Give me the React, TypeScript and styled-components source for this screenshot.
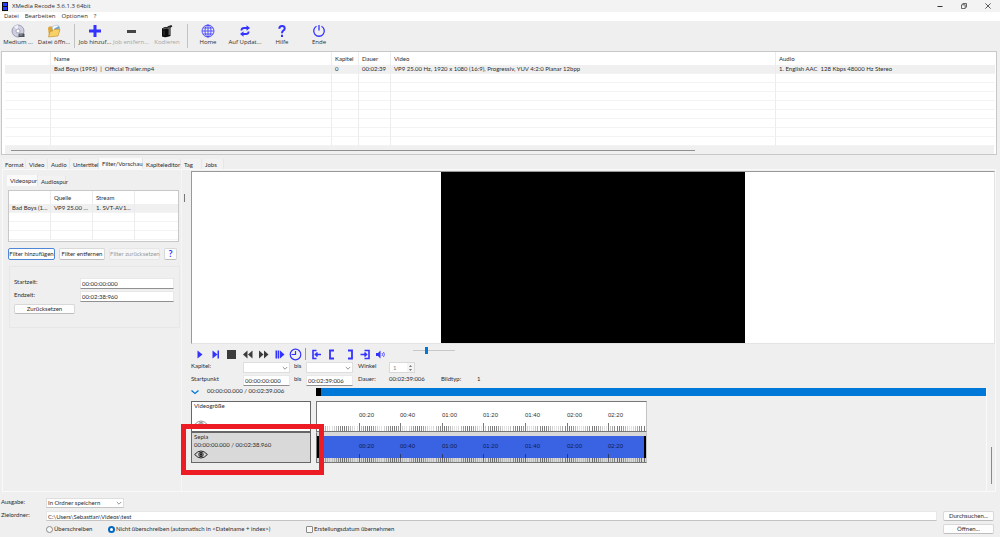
import React from "react";
import styled, { createGlobalStyle, css } from "styled-components";

const BLUE = "#3333ff";
const ACCENT = "#0078d7";
const CHROME_FONT = `"Open Sans", "Noto Sans", sans-serif`;

const GlobalStyle = createGlobalStyle`
  *, *::before, *::after { box-sizing: border-box; }
  body {
    margin: 0;
    background: #efefef;
    color: #2c2c2c;
    font-family: Lato, "Open Sans", sans-serif;
    font-size: 6px;
    line-height: 8px;
  }
  button, input, select { font: inherit; color: inherit; margin: 0; padding: 0; }
  svg { display: block; flex: none; }
`;

const Window = styled.div`
  display: flex;
  flex-direction: column;
  min-height: 100vh;
`;

/* ---------- window chrome ---------- */

const TitleBar = styled.header`
  display: flex;
  align-items: center;
  height: 12px;
  padding-left: 2px;
  background: #f3f3f3;
`;

const Title = styled.h1`
  flex: 1;
  margin: 0 0 0 4px;
  font-family: ${CHROME_FONT};
  font-size: 6px;
  line-height: 10px;
  font-weight: 400;
`;

const WindowButton = styled.button`
  display: grid;
  place-items: center;
  width: 24px;
  height: 12px;
  border: 0;
  background: none;
`;

const MenuBar = styled.nav`
  display: flex;
  gap: 6px;
  height: 9px;
  padding-left: 4px;
  background: #fff;
  font-family: ${CHROME_FONT};
`;

const MenuItem = styled.button`
  border: 0;
  background: none;
  line-height: 9px;
`;

const ToolBar = styled.div`
  display: flex;
  height: 30px;
  padding-top: 3px;
  font-family: ${CHROME_FONT};
`;

const ToolGroup = styled.div<{ $gap?: number }>`
  display: flex;
  gap: ${(p) => p.$gap ?? 0}px;
`;

const ToolButton = styled.button`
  display: flex;
  flex-direction: column;
  align-items: center;
  width: 36px;
  border: 0;
  background: none;
  line-height: 8px;
  white-space: nowrap;
  &:disabled { color: #a5a5a5; }
`;

const ToolSeparator = styled.div`
  width: 1px;
  height: 24px;
  margin: 0 2px;
  background: #c2c2c2;
`;

/* ---------- tables ---------- */

const ListBox = styled.div<{ $sub?: boolean }>`
  border: 1px solid #c8c8c8;
  background: #fff;
  ${(p) =>
    p.$sub
      ? css`
          height: 52px;
          margin: 4px 2px 6px 3px;
          overflow: hidden;
        `
      : css`
          margin: 0 3px 0 1px;
          padding: 0 1px 0 3px;
        `}
`;

const Grid = styled.table`
  width: 100%;
  table-layout: fixed;
  border-collapse: separate;
  border-spacing: 0;
  th, td {
    height: 9px;
    padding: 0 0 0 3px;
    font-weight: 400;
    text-align: left;
    line-height: 8px;
    white-space: nowrap;
    overflow: hidden;
    text-overflow: ellipsis;
    border-right: 1px solid #ececec;
    border-bottom: 1px solid #f3f3f3;
  }
  th { height: 13px; border-bottom: 0; }
  th:last-child, td:last-child { border-right: 0; }
`;

const SelectedRow = styled.tr`
  background: #f0f0f0;
`;

const HScroll = styled.div`
  height: 8px;
  margin-right: 1px;
  padding: 4px 0 0 6px;
  background: #f0f0f0;
`;

const HThumb = styled.div`
  width: calc(70% - 4px);
  height: 1px;
  background: #8f8f8f;
`;

/* ---------- tabs ---------- */

const TabList = styled.div`
  display: flex;
  align-items: flex-end;
  height: 11px;
  margin: 3px 0 0 2px;
`;

const Tab = styled.button<{ $width: number; $active?: boolean }>`
  width: ${(p) => p.$width}px;
  height: ${(p) => (p.$active ? 11 : 10)}px;
  padding-left: 3px;
  border: 0;
  border-right: 1px solid #e6e6e6;
  background: ${(p) => (p.$active ? "#fafafa" : "#f2f2f2")};
  text-align: left;
  line-height: 9px;
  white-space: nowrap;
`;

const TabPanel = styled.main`
  display: flex;
  flex: 1;
  margin: 0 4px 0 2px;
  border: 1px solid #f9f9f9;
`;

/* ---------- filter side panel ---------- */

const SidePanel = styled.section`
  flex: none;
  width: 177px;
  margin-left: 2px;
  border-right: 1px solid #f6f6f6;
`;

const SubTabs = styled(TabList)`
  margin: 5px 0 0 2px;
`;

const SplitHandle = styled.div`
  width: 1px;
  height: 8px;
  margin: 24px 5px 0 2px;
  background: #777;
`;

const ButtonRow = styled.div`
  display: flex;
  gap: 4px;
  margin-left: 3px;
`;

const PushButton = styled.button<{ $width?: number; $primary?: boolean; $tall?: boolean }>`
  width: ${(p) => (p.$width ? `${p.$width}px` : "100%")};
  height: ${(p) => (p.$tall ? 12 : 10)}px;
  border: 1px solid ${(p) => (p.$primary ? "#4f87d6" : "#d8d8d8")};
  border-bottom-color: ${(p) => (p.$primary ? "#4f87d6" : "#bdbdbd")};
  border-radius: 2px;
  background: #fdfdfd;
  line-height: 8px;
  text-align: center;
  white-space: nowrap;
  &:disabled { color: #9c9c9c; background: #f6f6f6; border-color: #e6e6e6; }
`;

const HelpMark = styled.span`
  color: ${BLUE};
  font-size: 9px;
  font-weight: 700;
`;

const TimeBox = styled.form`
  display: grid;
  grid-template-columns: 66px 94px;
  row-gap: 2px;
  height: 62px;
  margin: 6px 1px 0 4px;
  padding: 11px 0 0 4px;
  align-content: start;
  align-items: start;
  border: 1px solid #e7e7e7;
`;

const TextField = styled.input`
  width: 100%;
  height: 11px;
  padding-left: 1px;
  border: 1px solid #e8e8e8;
  border-bottom-color: #909090;
  background: #fff;
  line-height: 9px;
`;

/* ---------- preview ---------- */

const Preview = styled.section`
  flex: 1;
  min-width: 0;
  display: flex;
  flex-direction: column;
  padding-top: 1px;
`;

const Stage = styled.div`
  display: flex;
  justify-content: center;
  height: 173px;
  margin: 0 0 0 1px;
  border: 1px solid #999;
  border-right-color: #e3e3e3;
  border-bottom-color: #e3e3e3;
  background: #fff;
`;

const VideoFrame = styled.div`
  width: 304px;
  background: #000;
`;

const Transport = styled.div`
  display: flex;
  align-items: center;
  height: 18px;
  padding: 2px 0 0 1px;
`;

const TransportButton = styled.button`
  display: grid;
  place-items: center;
  width: 16px;
  height: 14px;
  border: 0;
  background: none;
`;

const TransportSeparator = styled.div`
  width: 1px;
  height: 12px;
  margin: 0 2px;
  background: #999;
`;

const Volume = styled.input`
  appearance: none;
  align-self: flex-start;
  width: 42px;
  height: 9px;
  margin-left: 25px;
  background: linear-gradient(#c8c8c8, #c8c8c8) center / 100% 1px no-repeat;
  &::-webkit-slider-thumb {
    appearance: none;
    width: 3px;
    height: 7px;
    background: ${ACCENT};
  }
`;

const Settings = styled.div`
  display: grid;
  grid-template-columns: 52px 51px 12px 52px 31px 52px 36px 30px;
  grid-auto-rows: 11px;
  row-gap: 2px;
  margin-bottom: 2px;
  padding-left: 1px;
  > label, > span, > output { line-height: 8px; white-space: nowrap; }
`;

const FieldSlot = styled.div`
  width: 47px;
`;

const SelectBox = styled.div<{ $width: number }>`
  display: grid;
  width: ${(p) => p.$width}px;
  align-items: center;
  > * { grid-area: 1 / 1; }
  > svg { justify-self: end; margin-right: 2px; pointer-events: none; }
`;

const Select = styled.select`
  appearance: none;
  width: 100%;
  height: 11px;
  padding-left: 1px;
  border: 1px solid #dedede;
  border-radius: 0;
  background: #fff;
  line-height: 9px;
`;

const Spinner = styled.div`
  display: flex;
  width: 26px;
  height: 11px;
  border: 1px solid #d9d9d9;
  background: #f4f4f4;
`;

const SpinnerInput = styled.input`
  width: 17px;
  padding-left: 3px;
  border: 0;
  background: #fff;
  line-height: 9px;
  color: #888;
`;

const SpinnerArrows = styled.div`
  flex: 1;
  display: grid;
  place-items: center;
`;

/* ---------- timeline ---------- */

const Timeline = styled.div`
  flex: 1;
  display: flex;
`;

const TimelineMain = styled.div`
  flex: 1;
  min-width: 0;
  padding-left: 1px;
  border-right: 1px solid #fafafa;
`;

const VScroll = styled.div`
  width: 8px;
  padding: 59px 0 0 4px;
`;

const VThumb = styled.div`
  width: 1px;
  height: 37px;
  background: #8a8a8a;
`;

const SeekRow = styled.div`
  display: grid;
  grid-template-columns: 125px 1fr;
  height: 13px;
`;

const SeekToggle = styled.button`
  display: flex;
  align-items: center;
  gap: 8px;
  height: 8px;
  border: 0;
  background: none;
`;

const SeekTime = styled.span`
  margin-top: -2px;
`;

const SeekBar = styled.div`
  height: 8px;
  border-left: 5px solid #000;
  background: ${ACCENT};
`;

const Track = styled.div`
  position: relative;
  display: grid;
  grid-template-columns: 120px 331px;
  column-gap: 5px;
  height: 31px;
`;

const TrackHead = styled.div<{ $selected?: boolean }>`
  display: flex;
  flex-direction: column;
  overflow: hidden;
  padding: 0 2px;
  border: 1px solid #666;
  background: ${(p) => (p.$selected ? "#d9d9d9" : "#fff")};
  > svg { margin-top: ${(p) => (p.$selected ? 1 : 10)}px; }
`;

const RulerBox = styled.div<{ $selected?: boolean }>`
  overflow: hidden;
  border: 1px solid #777;
  border-right-color: #c4c4c4;
  border-top-color: ${(p) => (p.$selected ? "#d9d9d9" : "#777")};
  background: ${(p) => (p.$selected ? "#d9d9d9" : "#fff")};
`;

const Highlight = styled.div`
  position: absolute;
  top: -8px;
  left: -10px;
  width: 143px;
  height: 51px;
  border: 5px solid #ed1c24;
  pointer-events: none;
`;

/* ---------- output ---------- */

const Output = styled.footer`
  display: grid;
  grid-template-columns: 45px 1fr 51px;
  grid-auto-rows: 10px;
  row-gap: 3px;
  padding: 6px 6px 3px 1px;
  select, input[type="text"] { height: 10px; line-height: 8px; border-bottom-color: #c4c4c4; }
`;

const OutputLabel = styled.label`
  line-height: 8px;
`;

const PathField = styled.div`
  grid-column: 2;
  padding-right: 6px;
  display: flex;
`;

const Options = styled.div`
  grid-column: 2;
  display: flex;
  align-items: center;
`;

const Option = styled.label<{ $width?: number }>`
  display: flex;
  align-items: center;
  gap: 1px;
  width: ${(p) => (p.$width ? `${p.$width}px` : "auto")};
  line-height: 8px;
  white-space: nowrap;
`;

const Mark = styled.input`
  appearance: none;
  flex: none;
  width: 7px;
  height: 7px;
  border: 1px solid #8a8a8a;
  border-radius: ${(p) => (p.type === "radio" ? "50%" : "1px")};
  background: #f8f8f8;
  &:checked { border: 2px solid #0067c0; background: #fff; }
`;

/* ---------- icons ---------- */

const Stroke = ({ d, color = BLUE, width = 1.5, size = 13 }: { d: string; color?: string; width?: number; size?: number }) => (
  <svg width={size} height={size} viewBox="0 0 13 13" fill="none" stroke={color} strokeWidth={width}>
    <path d={d} />
  </svg>
);

const Fill = ({ d, color = BLUE, size = 13 }: { d: string; color?: string; size?: number }) => (
  <svg width={size} height={size} viewBox="0 0 13 13" fill={color}>
    <path d={d} />
  </svg>
);

const DiscIcon = () => (
  <svg width="14" height="14" viewBox="0 0 14 14">
    <circle cx="7" cy="7" r="6" fill="#cfcfe2" stroke="#8d8da6" strokeWidth=".8" />
    <path d="M7 7 3 2.500A6 6 0 0 1 7 1zM7 7l4 4.500A6 6 0 0 1 8 13z" fill="#efeffc" />
    <circle cx="7" cy="7" r="2" fill="#fff" stroke="#8c8ca0" strokeWidth=".7" />
    <rect x="7.500" y="9.500" width="6" height="3.500" rx=".6" fill="#4c5258" />
    <path d="M8.500 11h3" stroke="#bfc6cc" strokeWidth=".8" />
  </svg>
);

const FolderIcon = () => (
  <svg width="14" height="14" viewBox="0 0 14 14">
    <path d="M1 4l1-1.500h3L6 4h5v8H2z" fill="#dfa436" />
    <path d="M5 2.500 11 1l1.500 7-6 1.500z" fill="#fff" stroke="#91a6b8" strokeWidth=".5" />
    <path d="M7 4.500 12 2l1 2-3 3z" fill="#74a9d4" />
    <path d="M1.500 13 3 7.500l3-.8 1-1.200 6-.5-2 7z" fill="#f8d267" stroke="#bf8a24" strokeWidth=".6" />
  </svg>
);

const FilmCanIcon = () => (
  <svg width="14" height="14" viewBox="0 0 14 14">
    <path d="M2 4.500Q6 2 10.500 4v8Q6 14 2 12.500z" fill="#0c0c0c" />
    <path d="M7 2.500 11.500 1l.8 1.600-2 1.400z" fill="#222" />
    <path d="M3 5q3.500-1.500 7-.3" stroke="#888" strokeWidth=".7" fill="none" />
    <path d="M9.200 5.500v5.500" stroke="#dedede" strokeWidth="1.200" strokeDasharray="1 1" />
    <path d="M4 6.500v5" stroke="#555" strokeWidth=".7" />
  </svg>
);

const GlobeIcon = () => (
  <svg width="14" height="14" viewBox="0 0 14 14" fill="none" stroke={BLUE} strokeWidth=".8">
    <circle cx="7" cy="7" r="6" />
    <ellipse cx="7" cy="7" rx="3" ry="6" />
    <path d="M7 1v12M1 7h12M2 4h10M2 10h10" />
  </svg>
);

const RefreshIcon = () => (
  <svg width="14" height="14" viewBox="0 0 14 14" fill={BLUE}>
    <path d="M2.500 6.500C2.500 4 4 3 6 3h2.500V1.200L12 4 8.500 6.800V5H6Q4.300 5 4.300 6.500z" />
    <path d="M11.500 7.500C11.500 10 10 11 8 11H5.500v1.800L2 10l3.500-2.800V9H8q1.700 0 1.700-1.500z" />
  </svg>
);

const QuestionIcon = () => (
  <svg width="14" height="14" viewBox="0 0 14 14" fill="none" stroke={BLUE} strokeWidth="2">
    <path d="M4.300 4.800Q4.300 2 7 2t2.700 2.400Q9.700 5.800 8.200 6.700 7 7.500 7 9.200M7 10.800V13" />
  </svg>
);

const PowerIcon = () => (
  <svg width="14" height="14" viewBox="0 0 14 14" fill="none" stroke={BLUE} strokeWidth="1.300">
    <path d="M4.500 2.300a5.300 5.300 0 1 0 5 0M7 1v5.500" />
  </svg>
);

const Chevron = ({ color = "#777" }: { color?: string }) => (
  <svg width="6" height="6" viewBox="0 0 6 6" fill="none" stroke={color} strokeWidth=".8">
    <path d="M.8 2 3 4.200 5.200 2" />
  </svg>
);

const EyeIcon = ({ color = "#111" }: { color?: string }) => (
  <svg width="14" height="9" viewBox="0 0 14 9" fill="none" stroke={color} strokeWidth=".9">
    <path d="M.6 4.500Q7-2.500 13.400 4.500 7 11.500.6 4.500z" />
    <circle cx="7" cy="4.500" r="2.200" />
    <circle cx="7" cy="4.500" r=".9" fill={color} />
  </svg>
);

/* ---------- ruler ---------- */

const STEP = 2.08;
const seconds = Array.from({ length: 158 }, (_, i) => i + 1);
const labels = ["00:20", "00:40", "01:00", "01:20", "01:40", "02:00", "02:20"];

const Ruler = ({ clip }: { clip?: boolean }) => (
  <svg width="329" height="29" viewBox="0 0 329 29">
    {clip && <rect x="0" y="3" width="329" height="22" fill="#3963e3" />}
    {clip && <path d="M0 3h2v22H0zM327 3h2v22h-2z" fill="#000" />}
    {seconds.map((s) => {
      const x = Math.round(s * STEP);
      const major = s % 20 === 0;
      const shade = major ? 0.6 : 0.12 + 0.5 * Math.cos((Math.PI * (x - 26)) / 25) ** 2;
      const top = major ? 21 : clip ? 25 : 24;
      return <rect key={s} x={x} y={top} width="1" height={29 - top} fill="#222" opacity={shade} />;
    })}
    {labels.map((t, i) => (
      <text
        key={t}
        x={Math.round((i + 1) * 20 * STEP)}
        y="15"
        fontSize="6"
        fontFamily="Liberation Sans"
        fill={clip ? "#101c50" : "#333"}
      >
        {t}
      </text>
    ))}
  </svg>
);

/* ---------- page ---------- */

const emptyRows = (rows: number, cols: number) =>
  Array.from({ length: rows }, (_, r) => (
    <tr key={r}>
      {Array.from({ length: cols }, (_, c) => (
        <td key={c} />
      ))}
    </tr>
  ));

const Cols = ({ widths }: { widths: number[] }) => (
  <colgroup>
    {widths.map((w, i) => (
      <col key={i} style={{ width: w }} />
    ))}
    <col />
  </colgroup>
);

const DARK = "#3b3b3b";

const transport = [
  { name: "Wiedergabe", icon: <Fill d="M4.500 2.500 9.500 6.500 4.500 10.500z" /> },
  { name: "Nächstes Bild", icon: <Fill d="M3.500 2.500 8.500 6.500 3.500 10.500zM8.500 2.500H10v8H8.500z" /> },
  { name: "Stopp", icon: <Fill color={DARK} d="M2 2h9v9H2z" /> },
  { name: "Zurückspulen", icon: <Fill color={DARK} d="M6.500 2.500v8L2 6.500zM11.500 2.500v8L7 6.500z" /> },
  { name: "Vorspulen", icon: <Fill color={DARK} d="M2 2.500 6.500 6.500 2 10.500zM7 2.500l4.500 4L7 10.500z" /> },
  { name: "Zeitlupe", icon: <Fill d="M2.500 2.500h1.500v8H2.500zM4.600 2.500h1.700v8H4.600zM7 2.500l4.500 4L7 10.500z" /> },
  { name: "Zeit", icon: <Stroke width={1.2} d="M6.500 1.200a5.300 5.300 0 1 1 0 10.600a5.300 5.300 0 1 1 0-10.600M6.500 3v3.500H2.500" /> },
];

const marks = [
  { name: "Zum Anfang", icon: <Stroke width={1.6} d="M6.500 2.500H3v8h3.500M11 6.500H4.500M7.500 4.500 5.500 6.500 7.500 8.500" /> },
  { name: "Anfang setzen", icon: <Stroke width={1.8} d="M8 2.500H4v8h4" /> },
  { name: "Ende setzen", icon: <Stroke width={1.8} d="M6 2.500h4v8H6" /> },
  { name: "Zum Ende", icon: <Stroke width={1.6} d="M6.500 2.500H11v8H6.500M2.500 6.500H9M6.500 4.500 8.500 6.500 6.500 8.500" /> },
  {
    name: "Ton",
    icon: (
      <svg width="13" height="13" viewBox="0 0 13 13" fill={BLUE}>
        <path d="M2 5h2l2.500-2.500v8L4 8H2z" />
        <path d="M8 5q1 1.500 0 3M9.500 4q1.800 2.500 0 5" fill="none" stroke={BLUE} strokeWidth=".8" />
      </svg>
    ),
  },
];

export default function App() {
  return (
    <Window>
      <GlobalStyle />
      <TitleBar>
        <svg width="6" height="9" viewBox="0 0 6 9">
          <rect width="6" height="9" fill="#111" />
          <path d="M1 1h4v3H1zM1 5h4v3H1z" fill="#2a3cff" />
        </svg>
        <Title>XMedia Recode 3.6.1.3 64bit</Title>
        <WindowButton aria-label="Minimieren">
          <svg width="6" height="6" viewBox="0 0 6 6"><path d="M.5 3.500h5" stroke="#333" /></svg>
        </WindowButton>
        <WindowButton aria-label="Wiederherstellen">
          <svg width="6" height="6" viewBox="0 0 6 6" fill="none" stroke="#444" strokeWidth=".8">
            <path d="M.5 1.800h3.700v3.700H.5zM1.800 1.500V.5h3.700v3.700h-1" />
          </svg>
        </WindowButton>
        <WindowButton aria-label="Schließen">
          <svg width="6" height="6" viewBox="0 0 6 6"><path d="M.4.4l5.200 5.200M5.600.4.4 5.600" stroke="#333" strokeWidth=".8" /></svg>
        </WindowButton>
      </TitleBar>
      <MenuBar>
        <MenuItem>Datei</MenuItem>
        <MenuItem>Bearbeiten</MenuItem>
        <MenuItem>Optionen</MenuItem>
        <MenuItem>?</MenuItem>
      </MenuBar>
      <ToolBar>
        <ToolGroup>
          <ToolButton><DiscIcon />Medium ...</ToolButton>
          <ToolButton><FolderIcon />Datei öffn...</ToolButton>
        </ToolGroup>
        <ToolSeparator />
        <ToolGroup>
          <ToolButton>
            <svg width="14" height="14" viewBox="0 0 14 14"><path d="M5.500 1h3v4.500H13v3H8.500V13h-3V8.500H1v-3h4.500z" fill={BLUE} /></svg>
            Job hinzuf...
          </ToolButton>
          <ToolButton disabled>
            <svg width="14" height="14" viewBox="0 0 14 14"><path d="M3 6h9v3H3z" fill="#444" /></svg>
            Job entfern...
          </ToolButton>
          <ToolButton disabled><FilmCanIcon />Kodieren</ToolButton>
        </ToolGroup>
        <ToolSeparator />
        <ToolGroup $gap={1}>
          <ToolButton><GlobeIcon />Home</ToolButton>
          <ToolButton><RefreshIcon />Auf Updat...</ToolButton>
          <ToolButton><QuestionIcon />Hilfe</ToolButton>
          <ToolButton><PowerIcon />Ende</ToolButton>
        </ToolGroup>
      </ToolBar>

      <ListBox>
        <Grid>
          <Cols widths={[46, 281, 27, 32, 385]} />
          <thead>
            <tr><th /><th>Name</th><th>Kapitel</th><th>Dauer</th><th>Video</th><th>Audio</th></tr>
          </thead>
          <tbody>
            <SelectedRow>
              <td />
              <td>Bad Boys (1995) &nbsp;| &nbsp;Official Trailer.mp4</td>
              <td>0</td>
              <td>00:02:39</td>
              <td>VP9 25.00 Hz, 1920 x 1080 (16:9), Progressiv, YUV 4:2:0 Planar 12bpp</td>
              <td>1. English AAC &nbsp;128 Kbps 48000 Hz Stereo</td>
            </SelectedRow>
            {emptyRows(8, 6)}
          </tbody>
        </Grid>
        <HScroll><HThumb /></HScroll>
      </ListBox>

      <TabList>
        <Tab $width={24}>Format</Tab>
        <Tab $width={22}>Video</Tab>
        <Tab $width={22}>Audio</Tab>
        <Tab $width={29}>Untertitel</Tab>
        <Tab $width={44} $active>Filter/Vorschau</Tab>
        <Tab $width={38}>Kapiteleditor</Tab>
        <Tab $width={21}>Tag</Tab>
        <Tab $width={22}>Jobs</Tab>
      </TabList>

      <TabPanel>
        <SidePanel>
          <SubTabs>
            <Tab $width={31} $active>Videospur</Tab>
            <Tab $width={28}>Audiospur</Tab>
          </SubTabs>
          <ListBox $sub>
            <Grid>
              <Cols widths={[42, 42, 42]} />
              <thead>
                <tr><th /><th>Quelle</th><th>Stream</th><th /></tr>
              </thead>
              <tbody>
                <SelectedRow>
                  <td>Bad Boys (1...</td>
                  <td>VP9 25.00 ...</td>
                  <td>1. SVT-AV1...</td>
                  <td />
                </SelectedRow>
                {emptyRows(3, 4)}
              </tbody>
            </Grid>
          </ListBox>
          <ButtonRow>
            <PushButton $tall $primary $width={47}>Filter hinzufügen</PushButton>
            <PushButton $tall $width={46}>Filter entfernen</PushButton>
            <PushButton $tall $width={51} disabled>Filter zurücksetzen</PushButton>
            <PushButton $tall $width={13} aria-label="Hilfe"><HelpMark>?</HelpMark></PushButton>
          </ButtonRow>
          <TimeBox>
            <label htmlFor="start">Startzeit:</label>
            <TextField id="start" defaultValue="00:00:00:000" />
            <label htmlFor="end">Endzeit:</label>
            <TextField id="end" defaultValue="00:02:38:960" />
            <PushButton type="button" $width={61}>Zurücksetzen</PushButton>
          </TimeBox>
        </SidePanel>
        <SplitHandle />

        <Preview>
          <Stage><VideoFrame /></Stage>
          <Transport>
            {transport.map((b) => (
              <TransportButton key={b.name} aria-label={b.name}>{b.icon}</TransportButton>
            ))}
            <TransportSeparator />
            {marks.map((b) => (
              <TransportButton key={b.name} aria-label={b.name}>{b.icon}</TransportButton>
            ))}
            <Volume type="range" aria-label="Lautstärke" min={0} max={100} defaultValue={32} />
          </Transport>
          <Settings>
            <label htmlFor="chapterFrom">Kapitel:</label>
            <SelectBox $width={47}><Select id="chapterFrom" /><Chevron /></SelectBox>
            <label htmlFor="chapterTo">bis</label>
            <SelectBox $width={47}><Select id="chapterTo" /><Chevron /></SelectBox>
            <label htmlFor="angle">Winkel</label>
            <Spinner>
              <SpinnerInput id="angle" defaultValue="1" />
              <SpinnerArrows>
                <svg width="5" height="8" viewBox="0 0 5 8" fill="#777"><path d="M1 3 2.500 1 4 3zM1 5l1.500 2L4 5z" /></svg>
              </SpinnerArrows>
            </Spinner>
            <span />
            <span />
            <label htmlFor="startPoint">Startpunkt</label>
            <FieldSlot><TextField id="startPoint" defaultValue="00:00:00:000" /></FieldSlot>
            <label htmlFor="endPoint">bis</label>
            <FieldSlot><TextField id="endPoint" defaultValue="00:02:39:006" /></FieldSlot>
            <span>Dauer:</span>
            <output>00:02:39:006</output>
            <span>Bildtyp:</span>
            <output>1</output>
          </Settings>
          <Timeline>
            <TimelineMain>
              <SeekRow>
                <SeekToggle>
                  <svg width="8" height="8" viewBox="0 0 8 8" fill="none" stroke={ACCENT} strokeWidth="1.300">
                    <path d="M.5 2.500 4 5.500 7.500 2.500" />
                  </svg>
                  <SeekTime>00:00:00.000 / 00:02:39.006</SeekTime>
                </SeekToggle>
                <SeekBar />
              </SeekRow>
              <Track>
                <TrackHead>Videogröße<EyeIcon color="#888" /></TrackHead>
                <RulerBox><Ruler /></RulerBox>
              </Track>
              <Track>
                <TrackHead $selected>
                  <span>Sepia</span>
                  <span>00:00:00.000 / 00:02:38.960</span>
                  <EyeIcon />
                </TrackHead>
                <RulerBox $selected><Ruler clip /></RulerBox>
                <Highlight />
              </Track>
            </TimelineMain>
            <VScroll><VThumb /></VScroll>
          </Timeline>
        </Preview>
      </TabPanel>

      <Output>
        <OutputLabel htmlFor="mode">Ausgabe:</OutputLabel>
        <SelectBox $width={78}>
          <Select id="mode"><option>In Ordner speichern</option></Select>
          <Chevron />
        </SelectBox>
        <span />
        <OutputLabel htmlFor="target">Zielordner:</OutputLabel>
        <PathField><TextField type="text" id="target" defaultValue="C:\Users\Sebastian\Videos\test" /></PathField>
        <PushButton>Durchsuchen...</PushButton>
        <Options>
          <Option $width={62}><Mark type="radio" name="overwrite" />Überschreiben</Option>
          <Option $width={198}>
            <Mark type="radio" name="overwrite" defaultChecked />
            Nicht überschreiben (automatisch in &lt;Dateiname + index&gt;)
          </Option>
          <Option><Mark type="checkbox" />Erstellungsdatum übernehmen</Option>
        </Options>
        <PushButton>Öffnen...</PushButton>
      </Output>
    </Window>
  );
}
